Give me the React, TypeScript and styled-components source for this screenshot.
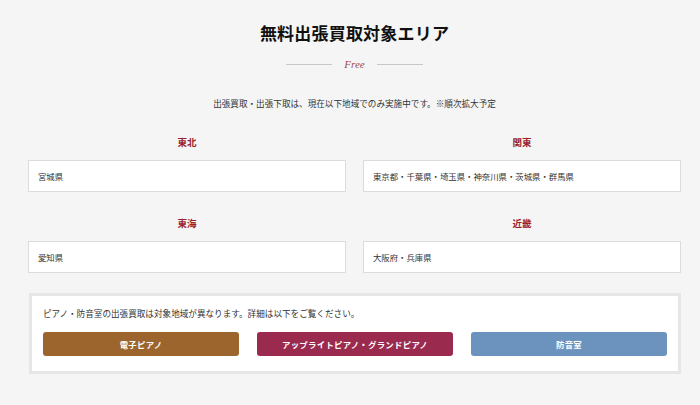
import React from "react";
import styled, { createGlobalStyle } from "styled-components";

const Global = createGlobalStyle`
  html, body { margin: 0; padding: 0; background: #f5f5f5; }
  body { font-family: "Noto Sans CJK JP", "Noto Sans", sans-serif; color: #333; }
`;

const Page = styled.div`
  width: 653px;
  margin-left: 28px;
  padding-top: 20px;
  padding-bottom: 30px;
`;

const Title = styled.h2`
  margin: 0;
  text-align: center;
  font-size: 17px;
  font-weight: 700;
  line-height: 26px;
  color: #111;
  letter-spacing: 0.2px;
`;

const Deco = styled.div`
  display: flex;
  align-items: center;
  justify-content: center;
  gap: 12px;
  margin-top: 11px;
  height: 14px;
`;

const Line = styled.span`
  width: 46px;
  height: 1px;
  background: #c8c8c8;
`;

const Script = styled.span`
  font-family: "Liberation Serif", "DejaVu Serif", serif;
  font-style: italic;
  font-size: 11px;
  color: #9b4d5a;
  line-height: 14px;
`;

const Lead = styled.p`
  margin: 25px 0 0;
  text-align: center;
  font-size: 8.6px;
  line-height: 14px;
  color: #333;
`;

const Grid = styled.div`
  display: grid;
  grid-template-columns: 1fr 1fr;
  column-gap: 17px;
  row-gap: 24px;
  margin-top: 25px;
`;

const Region = styled.div`
  display: flex;
  flex-direction: column;
`;

const RegionName = styled.h3`
  margin: 0;
  text-align: center;
  font-size: 9.5px;
  font-weight: 700;
  line-height: 14px;
  color: #9a1f2e;
`;

const RegionBox = styled.div`
  margin-top: 11px;
  height: 30px;
  background: #fff;
  border: 1px solid #dcdcdc;
  display: flex;
  align-items: center;
  padding: 0 9px;
  font-size: 8.4px;
  color: #333;
`;

const Panel = styled.div`
  margin-top: 20px;
  margin-left: 1px;
  background: #fff;
  border: 3px solid #e6e6e6;
  padding: 11px 11px 15px;
`;

const Note = styled.p`
  margin: 0;
  font-size: 8.6px;
  line-height: 12px;
  color: #333;
`;

const Buttons = styled.div`
  display: grid;
  grid-template-columns: repeat(3, 1fr);
  gap: 18px;
  margin-top: 13px;
`;

const Btn = styled.a<{ $bg: string }>`
  display: flex;
  align-items: center;
  justify-content: center;
  height: 24px;
  border-radius: 3px;
  background: ${(p) => p.$bg};
  color: #fff;
  font-size: 8.4px;
  font-weight: 700;
  text-decoration: none;
  letter-spacing: 0.3px;
`;

const regions = [
  { name: "東北", areas: "宮城県" },
  { name: "関東", areas: "東京都・千葉県・埼玉県・神奈川県・茨城県・群馬県" },
  { name: "東海", areas: "愛知県" },
  { name: "近畿", areas: "大阪府・兵庫県" },
];

const buttons = [
  { label: "電子ピアノ", bg: "#9b652d" },
  { label: "アップライトピアノ・グランドピアノ", bg: "#9b2a4f" },
  { label: "防音室", bg: "#6b93bd" },
];

export default function App() {
  return (
    <>
      <Global />
      <Page>
        <Title>無料出張買取対象エリア</Title>
        <Deco>
          <Line />
          <Script>Free</Script>
          <Line />
        </Deco>
        <Lead>出張買取・出張下取は、現在以下地域でのみ実施中です。※順次拡大予定</Lead>
        <Grid>
          {regions.map((r) => (
            <Region key={r.name}>
              <RegionName>{r.name}</RegionName>
              <RegionBox>{r.areas}</RegionBox>
            </Region>
          ))}
        </Grid>
        <Panel>
          <Note>ピアノ・防音室の出張買取は対象地域が異なります。詳細は以下をご覧ください。</Note>
          <Buttons>
            {buttons.map((b) => (
              <Btn key={b.label} $bg={b.bg} href="#">
                {b.label}
              </Btn>
            ))}
          </Buttons>
        </Panel>
      </Page>
    </>
  );
}
